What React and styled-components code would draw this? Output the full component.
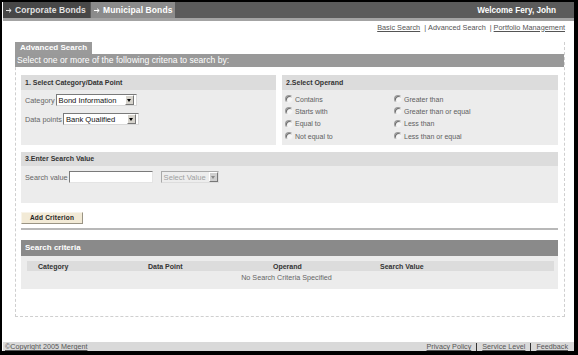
import React from "react";
import styled, { createGlobalStyle } from "styled-components";

const Global = createGlobalStyle`
  html, body { margin: 0; padding: 0; background: #fff; }
  body { font-family: "Liberation Sans", Arial, sans-serif; }
  * { box-sizing: border-box; }
`;

const Frame = styled.div`
  width: 578px;
  height: 355px;
  border-style: solid;
  border-color: #000;
  border-width: 2px 4px 4px 2px;
  display: flex;
  flex-direction: column;
  background: #fff;
  overflow: hidden;
  font-family: "Liberation Sans", Arial, sans-serif;
`;

const TopNav = styled.div`
  height: 19px;
  display: flex;
  align-items: stretch;
  background: #5b5b5b;
  border-bottom: 3px solid #a3a3a3;
  margin-left: 1px;
`;

const NavTab = styled.div`
  display: flex;
  align-items: center;
  gap: 3px;
  padding-left: 3px;
  width: ${(p) => p.$w}px;
  margin-right: 1px;
  background: ${(p) => (p.$active ? "#8b8b8b" : "#474747")};
  color: ${(p) => (p.$active ? "#fff" : "#e2e2e2")};
  font-weight: bold;
  font-size: 8.5px;
  letter-spacing: 0.1px;
  white-space: nowrap;
`;

const Welcome = styled.div`
  margin-left: auto;
  padding-right: 18px;
  display: flex;
  align-items: center;
  color: #fff;
  font-weight: bold;
  font-size: 8.2px;
`;

const LinksRow = styled.div`
  display: flex;
  justify-content: flex-end;
  align-items: center;
  padding-right: 9px;
  height: 10px;
  margin-top: 1px;
  font-size: 7.3px;
  color: #555;
  white-space: nowrap;
`;

const TopLink = styled.a`
  color: #555;
  text-decoration: ${(p) => (p.$plain ? "none" : "underline")};
`;

const Pipe = styled.span`
  margin: 0 2px 0 4px;
  color: #555;
`;

const SearchBox = styled.div`
  margin: 10px 0 0 13px;
  width: 550px;
  border: 1px dashed #cfcfcf;
  border-top: none;
  display: flex;
  flex-direction: column;
`;

const BoxTab = styled.div`
  margin-left: -1px;
  width: 77px;
  height: 12px;
  line-height: 12px;
  padding-left: 5px;
  background: #9a9a9a;
  color: #fff;
  font-weight: bold;
  font-size: 8px;
`;

const BoxBar = styled.div`
  margin-left: -1px;
  height: 13px;
  line-height: 13px;
  padding-left: 2px;
  background: #999;
  color: #fff;
  font-size: 8.6px;
  white-space: nowrap;
`;

const BoxContent = styled.div`
  padding: 8px 6px 27px 5px;
  display: flex;
  flex-direction: column;
`;

const PanelRow = styled.div`
  display: grid;
  grid-template-columns: 255px 1fr;
  gap: 6px;
`;

const Panel = styled.div`
  display: flex;
  flex-direction: column;
  margin-top: ${(p) => p.$mt || 0}px;
`;

const PanelHead = styled.div`
  height: ${(p) => p.$h}px;
  line-height: ${(p) => p.$h}px;
  padding-left: 4px;
  background: ${(p) => (p.$dark ? "#8a8a8a" : "#dcdcdc")};
  color: ${(p) => (p.$dark ? "#fff" : "#333")};
  font-weight: bold;
  font-size: ${(p) => (p.$dark ? 8 : 7)}px;
  white-space: nowrap;
`;

const PanelBody = styled.div`
  height: ${(p) => (p.$h ? `${p.$h}px` : "auto")};
  background: #ececec;
  padding: ${(p) => p.$pad || "0"};
  display: flex;
  flex-direction: column;
`;

const FieldRow = styled.div`
  display: flex;
  align-items: center;
  gap: ${(p) => p.$gap || 1}px;
  height: 12px;
  margin-bottom: ${(p) => p.$mb || 0}px;
`;

const Label = styled.span`
  font-size: 7.3px;
  color: #666;
  white-space: nowrap;
`;

const SelectBox = styled.div`
  width: ${(p) => p.$w}px;
  height: 12px;
  display: flex;
  align-items: center;
  justify-content: space-between;
  background: ${(p) => (p.$disabled ? "#ededed" : "#fff")};
  border: 1px solid;
  border-color: ${(p) => (p.$disabled ? "#aaa #ddd #ddd #aaa" : "#7a7a7a #d8d8d8 #d8d8d8 #7a7a7a")};
  padding-left: 2px;
  font-size: 7.6px;
  color: ${(p) => (p.$disabled ? "#a0a0a0" : "#111")};
  white-space: nowrap;
`;

const DropBtn = styled.span`
  width: 9px;
  height: 10px;
  background: ${(p) => (p.$disabled ? "#cfcfcf" : "#d6d3cc")};
  border: 1px solid;
  border-color: #fff #777 #777 #fff;
  display: flex;
  align-items: center;
  justify-content: center;
  margin-right: ${(p) => (p.$gapRight ? 2 : 0)}px;
  &::after {
    content: "";
    border-left: 2.5px solid transparent;
    border-right: 2.5px solid transparent;
    border-top: 3px solid ${(p) => (p.$disabled ? "#888" : "#000")};
  }
`;

const TextInput = styled.div`
  width: 84px;
  height: 12px;
  background: #fff;
  border: 1px solid;
  border-color: #7a7a7a #e4e4e4 #e4e4e4 #7a7a7a;
`;

const RadioGrid = styled.div`
  display: grid;
  grid-template-columns: 109px 1fr;
  grid-auto-rows: 12.3px;
  padding: 3px 0 0 3px;
`;

const RadioItem = styled.div`
  display: flex;
  align-items: center;
  gap: 1px;
  font-size: 7px;
  color: #606060;
  white-space: nowrap;
`;

const RadioDot = styled.span`
  width: 8px;
  height: 8px;
  border-radius: 50%;
  border: 1px solid;
  border-color: #9a9a9a #f0f0f0 #f0f0f0 #9a9a9a;
  background: #f6f6f6;
  box-shadow: inset 1px 1px 0 #6a6a6a;
  margin-right: 1px;
  flex: none;
`;

const AddButton = styled.div`
  margin-top: 9px;
  width: 62px;
  height: 12px;
  line-height: 10px;
  text-align: center;
  background: #f2ead6;
  border: 1px solid;
  border-color: #f8f4ea #9a9484 #9a9484 #f8f4ea;
  font-weight: bold;
  font-size: 6.5px;
  letter-spacing: 0.2px;
  color: #222;
`;

const Rule = styled.div`
  margin-top: 4px;
  height: 2px;
  background: #b8b8b8;
`;

const ColHeadRow = styled.div`
  display: grid;
  grid-template-columns: 110px 125px 107px 1fr;
  height: 10px;
  align-items: center;
  background: #dcdcdc;
`;

const ColHead = styled.span`
  padding-left: 11px;
  font-weight: bold;
  font-size: 7px;
  color: #333;
  white-space: nowrap;
`;

const EmptyMsg = styled.div`
  height: 13px;
  line-height: 13px;
  text-align: center;
  font-size: 7.2px;
  color: #666;
  padding-right: 8px;
`;

const Footer = styled.div`
  margin: auto 0 0 1px;
  height: 9px;
  background: #d9d9d9;
  display: flex;
  align-items: center;
  justify-content: space-between;
  padding: 0 6px 0 2px;
  font-size: 7.2px;
  color: #555;
`;

const FootLink = styled.a`
  color: #555;
  text-decoration: underline;
`;

const FootSep = styled.span`
  display: inline-block;
  width: 1px;
  height: 8px;
  background: #333;
  margin: 0 5px;
  vertical-align: middle;
`;

const FootLinks = styled.div`
  display: flex;
  align-items: center;
  white-space: nowrap;
`;

const Arrow = () => (
  <svg width="6" height="5" viewBox="0 0 6 5" aria-hidden="true">
    <path d="M0 2.5H5M3 0.6L5.2 2.5L3 4.4" stroke="currentColor" strokeWidth="1" fill="none" />
  </svg>
);

const radios = [
  "Contains",
  "Greater than",
  "Starts with",
  "Greater than or equal",
  "Equal to",
  "Less than",
  "Not equal to",
  "Less than or equal",
];

export default function App() {
  return (
    <>
      <Global />
      <Frame>
        <TopNav>
          <NavTab $w={87}>
            <Arrow />
            Corporate Bonds
          </NavTab>
          <NavTab $w={84} $active>
            <Arrow />
            Municipal Bonds
          </NavTab>
          <Welcome>Welcome Fery, John</Welcome>
        </TopNav>
        <LinksRow>
          <TopLink href="#">Basic Search</TopLink>
          <Pipe>|</Pipe>
          <TopLink $plain>Advanced Search</TopLink>
          <Pipe>|</Pipe>
          <TopLink href="#">Portfolio Management</TopLink>
        </LinksRow>

        <SearchBox>
          <BoxTab>Advanced Search</BoxTab>
          <BoxBar>Select one or more of the following critena to search by:</BoxBar>
          <BoxContent>
            <PanelRow>
              <Panel>
                <PanelHead $h={15}>1. Select Category/Data Point</PanelHead>
                <PanelBody $h={55} $pad="4px 0 0 4px">
                  <FieldRow $mb={7}>
                    <Label>Category</Label>
                    <SelectBox $w={81}>
                      Bond Information
                      <DropBtn $gapRight />
                    </SelectBox>
                  </FieldRow>
                  <FieldRow>
                    <Label>Data points</Label>
                    <SelectBox $w={76}>
                      Bank Qualified
                      <DropBtn $gapRight />
                    </SelectBox>
                  </FieldRow>
                </PanelBody>
              </Panel>
              <Panel>
                <PanelHead $h={15}>2.Select Operand</PanelHead>
                <PanelBody $h={55}>
                  <RadioGrid>
                    {radios.map((r) => (
                      <RadioItem key={r}>
                        <RadioDot />
                        {r}
                      </RadioItem>
                    ))}
                  </RadioGrid>
                </PanelBody>
              </Panel>
            </PanelRow>

            <Panel $mt={7}>
              <PanelHead $h={14}>3.Enter Search Value</PanelHead>
              <PanelBody $h={37} $pad="5px 0 0 4px">
                <FieldRow $gap={1}>
                  <Label>Search value</Label>
                  <TextInput />
                  <SelectBox $w={58} $disabled style={{ marginLeft: 7 }}>
                    Select Value
                    <DropBtn $disabled />
                  </SelectBox>
                </FieldRow>
              </PanelBody>
            </Panel>

            <AddButton>Add Criterion</AddButton>
            <Rule />

            <Panel $mt={10}>
              <PanelHead $h={16} $dark>Search criteria</PanelHead>
              <PanelBody $pad="5px 4px 5px 6px">
                <ColHeadRow>
                  <ColHead>Category</ColHead>
                  <ColHead>Data Point</ColHead>
                  <ColHead>Operand</ColHead>
                  <ColHead>Search Value</ColHead>
                </ColHeadRow>
                <EmptyMsg>No Search Criteria Specified</EmptyMsg>
              </PanelBody>
            </Panel>
          </BoxContent>
        </SearchBox>

        <Footer>
          <FootLink href="#">©Copyright 2005 Mergent</FootLink>
          <FootLinks>
            <FootLink href="#">Privacy Policy</FootLink>
            <FootSep />
            <FootLink href="#">Service Level</FootLink>
            <FootSep />
            <FootLink href="#">Feedback</FootLink>
          </FootLinks>
        </Footer>
      </Frame>
    </>
  );
}
